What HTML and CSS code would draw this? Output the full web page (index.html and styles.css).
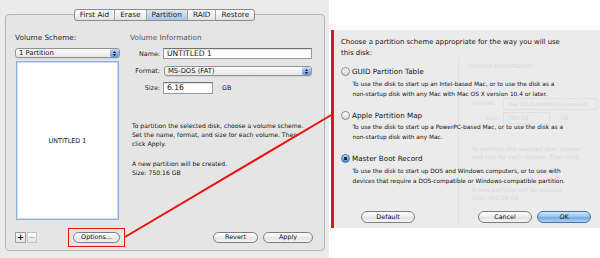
FILE: index.html
```html
<!DOCTYPE html>
<html lang="en">
<head>
    <meta charset="UTF-8">
    <title>Disk Utility - Partition Options</title>
    <link rel="stylesheet" href="styles.css">
</head>
<body>
    <div class="window">
        <div class="tabs">
            <span class="tab">First Aid</span>
            <span class="tab">Erase</span>
            <span class="tab active">Partition</span>
            <span class="tab">RAID</span>
            <span class="tab">Restore</span>
        </div>
        <div class="box">
            <div class="columns">
                <div class="scheme">
                    <div class="heading">Volume Scheme:</div>
                    <div class="popup scheme-popup">
                        <span class="popup-label">1 Partition</span>
                        <span class="stepper"><svg width="5" height="7" viewBox="0 0 5 7"><path d="M1 3 L2.5 1 L4 3 Z M1 4 L2.5 6 L4 4 Z" fill="#111"/></svg></span>
                    </div>
                    <div class="volume-list"><span>UNTITLED 1</span></div>
                </div>
                <div class="info">
                    <div class="heading light">Volume Information</div>
                    <div class="field-row name-row">
                        <label class="field-label">Name:</label>
                        <div class="text-field name-field">UNTITLED 1</div>
                    </div>
                    <div class="field-row format-row">
                        <label class="field-label">Format:</label>
                        <div class="popup format-popup">
                            <span class="popup-label">MS-DOS (FAT)</span>
                            <span class="stepper"><svg width="5" height="7" viewBox="0 0 5 7"><path d="M1 3 L2.5 1 L4 3 Z M1 4 L2.5 6 L4 4 Z" fill="#111"/></svg></span>
                        </div>
                    </div>
                    <div class="field-row size-row">
                        <label class="field-label">Size:</label>
                        <div class="text-field size-field">6.16</div>
                        <span class="unit">GB</span>
                    </div>
                    <p class="desc">To partition the selected disk, choose a volume scheme.<br>Set the name, format, and size for each volume. Then<br>click Apply.</p>
                    <p class="desc">A new partition will be created.<br>Size: 750.16 GB</p>
                </div>
            </div>
            <div class="footer">
                <div class="plus-minus">
                    <span class="pm plus">+</span>
                    <span class="pm minus">&minus;</span>
                </div>
                <div class="highlight">
                    <span class="button options-btn">Options...</span>
                </div>
                <div class="spacer"></div>
                <span class="button revert-btn">Revert</span>
                <span class="button apply-btn">Apply</span>
            </div>
        </div>
    </div>

    <div class="sheet">
        <!-- window underneath, showing through the sheet -->
        <div class="ghost">
            <span class="ghost-line"></span>
            <span class="ghost-text g2">Volume Information</span>
            <span class="ghost-text g3">Format:</span>
            <span class="ghost-box g4">Mac OS Extended (Journaled)</span>
            <span class="ghost-text g5">Size:</span>
            <span class="ghost-box g6">750.16</span>
            <span class="ghost-text g7">GB</span>
            <span class="ghost-text g8">To partition the selected disk, choose<br>and size for each volume. Then click</span>
            <span class="ghost-text g9">A new partition will be created.<br>Size: 750.16 GB</span>
        </div>
        <p class="intro">Choose a partition scheme appropriate for the way you will use<br>this disk:</p>
        <div class="option first">
            <div class="radio-row"><span class="radio"></span>GUID Partition Table</div>
            <p class="option-desc">To use the disk to start up an Intel-based Mac, or to use the disk as a<br>non-startup disk with any Mac with Mac OS X version 10.4 or later.</p>
        </div>
        <div class="option">
            <div class="radio-row"><span class="radio"></span>Apple Partition Map</div>
            <p class="option-desc">To use the disk to start up a PowerPC-based Mac, or to use the disk as a<br>non-startup disk with any Mac.</p>
        </div>
        <div class="option">
            <div class="radio-row"><span class="radio checked"></span>Master Boot Record</div>
            <p class="option-desc">To use the disk to start up DOS and Windows computers, or to use with<br>devices that require a DOS-compatible or Windows-compatible partition.</p>
        </div>
        <div class="sheet-footer">
            <span class="button default-btn">Default</span>
            <div class="spacer"></div>
            <span class="button cancel-btn">Cancel</span>
            <span class="button ok-btn">OK</span>
        </div>
    </div>

    <svg class="callout" width="600" height="258" viewBox="0 0 600 258">
        <line x1="125" y1="237" x2="333" y2="114" stroke="#e81414" stroke-width="2"/>
    </svg>
</body>
</html>
```

FILE: styles.css
```css
* {
    box-sizing: border-box;
}
body {
    margin: 0;
    width: 600px;
    height: 258px;
    display: flex;
    align-items: flex-start;
    background-color: #fff;
    font-family: "DejaVu Sans", sans-serif;
    color: #111;
    position: relative;
    overflow: hidden;
}
p {
    margin: 0;
}

/* left: disk utility window */
.window {
    width: 329px;
    height: 258px;
    background-color: #ebebeb;
    padding-top: 9px;
}
.tabs {
    display: flex;
    width: max-content;
    margin: 0 auto;
    border: 1px solid #8c8c8c;
    border-radius: 3px;
    overflow: hidden;
    background: linear-gradient(#fdfdfd, #e2e2e2);
    position: relative;
    z-index: 1;
}
.tab {
    font-size: 7.3px;
    line-height: 10px;
    padding: 0 5px;
    border-left: 1px solid #a6a6a6;
    color: #1a1a1a;
}
.tab:first-child {
    border-left: none;
}
.tab.active {
    background: linear-gradient(#dce8f7, #aac5e8);
}
.box {
    margin: -7px 4px 0 5px;
    border: 1px solid #b4b4b4;
    border-radius: 4px;
    background-color: #e5e5e5;
    padding: 18px 11px 3px 9px;
}
.columns {
    display: flex;
    gap: 10px;
}
.scheme {
    width: 105px;
}
.info {
    width: 183px;
}
.heading {
    font-size: 7.3px;
    line-height: 10px;
    color: #262626;
}
.heading.light {
    color: #575757;
}
.popup {
    display: flex;
    align-items: center;
    height: 10px;
    border: 1px solid #939393;
    border-radius: 3px;
    background: linear-gradient(#fff, #e6e6e6);
    padding-left: 3px;
    font-size: 6.8px;
    box-shadow: 0 1px 1px rgba(0, 0, 0, 0.08);
}
.popup-label {
    flex: 1;
    line-height: 8px;
}
.stepper {
    width: 9px;
    height: 8px;
    border-radius: 2px;
    background: linear-gradient(#c4dcf6, #5b97de);
    display: flex;
    align-items: center;
    justify-content: center;
}
.scheme-popup {
    margin-top: 5px;
}
.volume-list {
    margin: 3px 0 0 1px;
    width: 103px;
    height: 159px;
    border: 1px solid #8eafd8;
    box-shadow: inset 0 0 0 1px #cddcf0;
    background-color: #fff;
    display: flex;
    align-items: center;
    justify-content: center;
    font-size: 6.4px;
}
.field-row {
    display: flex;
    align-items: center;
}
.field-label {
    width: 33px;
    padding-right: 3px;
    text-align: right;
    font-size: 6.4px;
    color: #222;
}
.name-row {
    margin-top: 5px;
}
.format-row {
    margin-top: 7px;
}
.size-row {
    margin-top: 6px;
}
.text-field {
    height: 11px;
    border: 1px solid #9a9a9a;
    border-top-color: #727272;
    background-color: #fff;
    padding-left: 3px;
    font-size: 7.6px;
    line-height: 9px;
    box-shadow: inset 0 1px 1px rgba(0, 0, 0, 0.12);
}
.name-field {
    width: 149px;
}
.format-popup {
    width: 148px;
    margin-left: 1px;
}
.size-field {
    width: 50px;
    height: 12px;
    line-height: 10px;
}
.unit {
    margin-left: 9px;
    font-size: 6.4px;
}
.desc {
    margin-top: 26.5px;
    padding-left: 2px;
    font-size: 6.1px;
    line-height: 9px;
    white-space: nowrap;
}
.desc + .desc {
    margin-top: 11px;
}
.footer {
    display: flex;
    align-items: center;
    height: 20px;
    margin-top: 7px;
}
.plus-minus {
    display: flex;
    gap: 1px;
}
.pm {
    width: 11px;
    height: 11px;
    border: 1px solid #a0a0a0;
    background: linear-gradient(#fff, #e4e4e4);
    font-size: 9px;
    line-height: 9px;
    text-align: center;
}
.pm.plus {
    font-weight: bold;
    color: #111;
}
.pm.minus {
    width: 10px;
    color: #aaa;
    border-color: #c4c4c4;
}
.highlight {
    margin-left: 31px;
    border: 1px solid #e81414;
    padding: 3px 4px;
}
.spacer {
    flex: 1;
}
.button {
    height: 11px;
    border: 1px solid #7c7c7c;
    border-radius: 6px;
    background: linear-gradient(#ffffff, #ececec 50%, #e0e0e0 51%, #f6f6f6);
    font-size: 6.4px;
    display: flex;
    align-items: center;
    justify-content: center;
    color: #111;
}
.options-btn {
    width: 47px;
}
.revert-btn {
    width: 45px;
}
.apply-btn {
    width: 50px;
    margin-left: 5px;
}

/* right: partition options sheet */
.sheet {
    width: 269px;
    height: 198px;
    margin: 30px 0 0 2px;
    border-left: 3px solid #e81414;
    background-color: #ebebeb;
    padding: 6.5px 9px 5px 7px;
    display: flex;
    flex-direction: column;
    position: relative;
    z-index: 0;
}
.ghost {
    position: absolute;
    left: 0;
    top: 0;
    right: 0;
    bottom: 0;
    z-index: -1;
    overflow: hidden;
    color: #d9d9d9;
    font-size: 5.85px;
    line-height: 8px;
}
.ghost-line {
    position: absolute;
    left: 124px;
    top: 28px;
    bottom: 0;
    width: 1px;
    background-color: #e1e1e1;
}
.ghost-text,
.ghost-box {
    position: absolute;
    white-space: nowrap;
}
.ghost-box {
    height: 12px;
    border: 1px solid #e0e0e0;
    padding-left: 4px;
    line-height: 10px;
    overflow: hidden;
}
.g2 { left: 134px; top: 32px; font-size: 6.6px; }
.g3 { left: 139px; top: 69px; }
.g4 { left: 169px; top: 68px; width: 94px; font-size: 5.5px; }
.g5 { left: 151px; top: 84px; }
.g6 { left: 169px; top: 82px; width: 47px; }
.g7 { left: 226px; top: 84px; }
.g8 { left: 138px; top: 115px; }
.g9 { left: 138px; top: 156px; }
.intro {
    font-size: 6.9px;
    line-height: 11px;
    white-space: nowrap;
}
.option {
    margin-top: 11.5px;
}
.option.first {
    margin-top: 8px;
}
.radio-row {
    display: flex;
    align-items: center;
    gap: 2px;
    height: 10px;
    font-size: 7.2px;
}
.radio {
    width: 9px;
    height: 9px;
    border-radius: 50%;
    border: 1px solid #8a8a8a;
    background: linear-gradient(#ffffff, #d8d8d8);
}
.radio.checked {
    border-color: #4a6d96;
    background: radial-gradient(circle, #1b2b45 0 1.5px, transparent 2px), linear-gradient(#bcd7f5, #3f84d8);
}
.option-desc {
    margin-top: 2px;
    padding-left: 11.5px;
    font-size: 5.85px;
    line-height: 10px;
    white-space: nowrap;
}
.sheet-footer {
    margin-top: auto;
    display: flex;
    align-items: center;
}
.default-btn {
    width: 54px;
    height: 12px;
    margin-left: 20px;
}
.cancel-btn {
    width: 54px;
    height: 12px;
}
.ok-btn {
    width: 54px;
    height: 12px;
    margin-left: 5px;
    border-color: #4b6f9d;
    background: linear-gradient(#d3e6fb, #93c0f1 50%, #6ea9ec 51%, #acd2f8);
}
.callout {
    position: absolute;
    left: 0;
    top: 0;
    pointer-events: none;
}
```
